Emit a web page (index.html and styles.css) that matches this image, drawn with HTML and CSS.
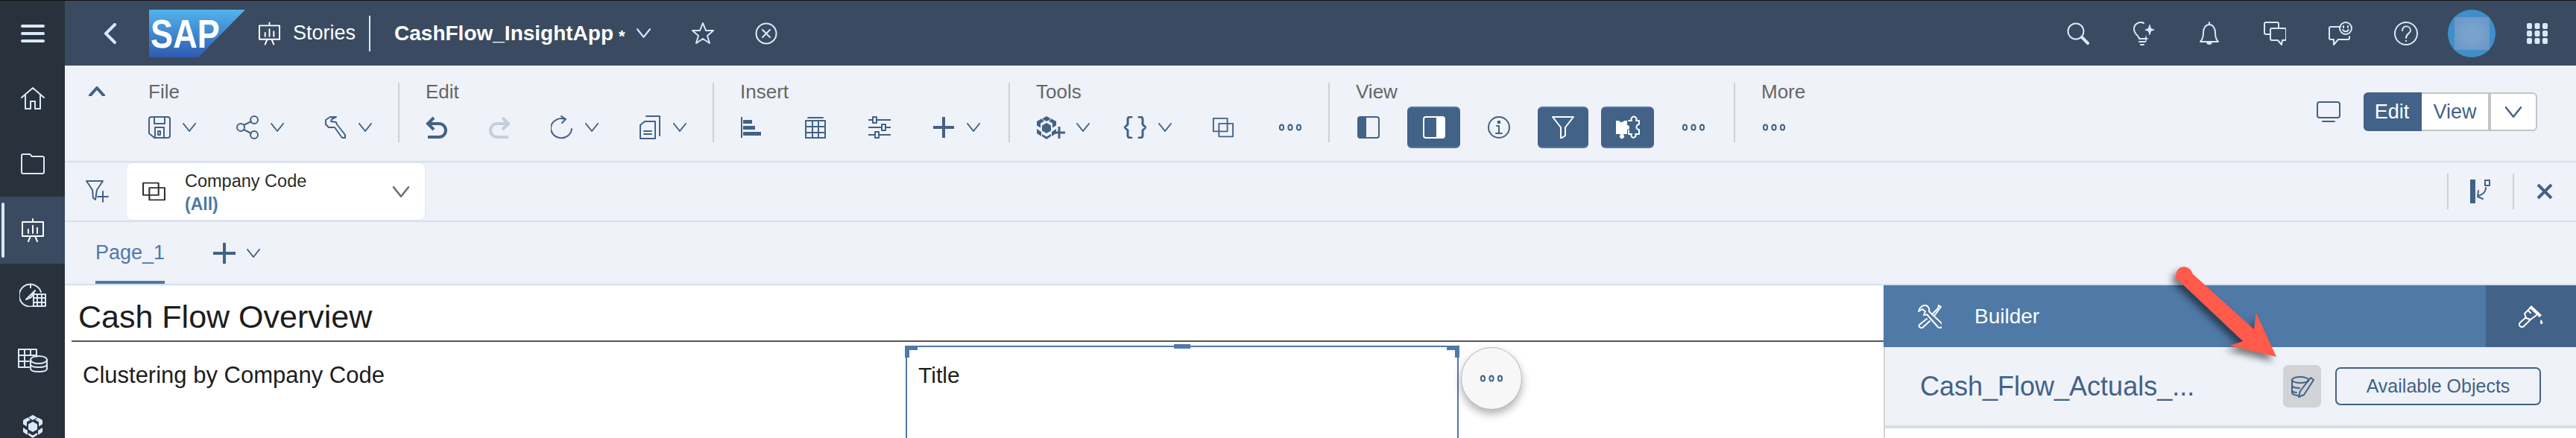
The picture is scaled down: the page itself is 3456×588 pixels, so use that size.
FILE: index.html
```html
<!DOCTYPE html>
<html lang="en">
<head>
  <meta charset="UTF-8">
  <title>CashFlow_InsightApp - Stories</title>
  <link rel="stylesheet" href="styles.css">
</head>
<body>
  <svg class="defs" width="0" height="0">
    <defs>
      <symbol id="chev" viewBox="0 0 18 12"><path d="M1 1l8 10 8-10"/></symbol>
      <symbol id="dots" viewBox="0 0 32 10"><ellipse cx="4.5" cy="5" rx="2.6" ry="3.6"/><ellipse cx="16" cy="5" rx="2.6" ry="3.6"/><ellipse cx="27.5" cy="5" rx="2.6" ry="3.6"/></symbol>
      <symbol id="stories" viewBox="0 0 30 32"><path d="M1 5h28v19H1zM15 1v4M9 31l3-7M21 31l-3-7"/><path d="M9 20v-5M15 20V10M21 20v-7"/></symbol>
      <symbol id="layers" viewBox="0 0 32 32" preserveAspectRatio="none"><path d="M2 2h20v20H2zM10 10h20v20H10z"/></symbol>
      <symbol id="hex" viewBox="0 0 28 32"><path d="M14 1l6 3.500-6 3.500-6-3.500zM14 10l6 3.500v7l-6 3.500-6-3.500v-7zM1 8l6-3.500 4 3-5 3v6l-5-3zM27 8l-6-3.500-4 3 5 3v6l5-3zM1 18l6 4v6l-6-4zM27 18l-6 4v6l6-4zM8 25l6 3.500 6-3.500v3l-6 4-6-4z"/></symbol>
    </defs>
  </svg>

  <nav class="sidenav">
    <a class="nav-item nav-first"><svg class="ico" width="32" height="24" viewBox="0 0 32 24"><path class="thick" d="M2 2h28M2 12h28M2 22h28"/></svg></a>
    <a class="nav-item"><svg class="ico" width="32" height="30" viewBox="0 0 32 30"><path d="M1 14L16 1l15 13M6 10v19h7V19h6v10h7V10"/></svg></a>
    <a class="nav-item"><svg class="ico" width="32" height="28" viewBox="0 0 32 28"><path d="M1 3a2 2 0 0 1 2-2h9l3 3h14a2 2 0 0 1 2 2v19a2 2 0 0 1-2 2H3a2 2 0 0 1-2-2z"/></svg></a>
    <a class="nav-item active"><svg class="ico ico-white" width="30" height="32"><use href="#stories"/></svg></a>
    <a class="nav-item"><svg class="ico" width="36" height="32" viewBox="0 0 36 32"><path d="M19 31A15 15 0 1 1 29 12M9 22l12-12-5 9zM15 3v3"/><path d="M19 15h16v16H19zM24 15v16M30 15v16M19 20h16M19 26h16"/></svg></a>
    <a class="nav-item"><svg class="ico" width="40" height="32" viewBox="0 0 40 32"><path d="M1 1h24v10M1 1v24h14M1 9h24M1 17h14M9 1v24M17 1v8"/><ellipse cx="28" cy="15" rx="11" ry="5"/><path d="M17 15v12c0 3 5 4 11 4s11-1 11-4V15M17 21c0 3 5 4 11 4s11-1 11-4"/></svg></a>
    <a class="nav-item"><svg class="hex-light" width="28" height="32"><use href="#hex"/></svg></a>
  </nav>

  <div class="main">
    <header class="shellbar">
      <svg class="ico back" width="16" height="28" viewBox="0 0 16 28"><path class="thick" d="M14 2L2 14l12 12"/></svg>
      <svg class="logo" width="129" height="64" viewBox="0 0 129 64">
        <defs>
          <linearGradient id="sapblue" x1="0" y1="0" x2="0" y2="1">
            <stop offset="0" stop-color="#52b4ec"/>
            <stop offset="1" stop-color="#2e5bb2"/>
          </linearGradient>
        </defs>
        <path d="M0 0h129L66 64H0z" fill="url(#sapblue)"/>
        <text class="logo-text" x="2" y="51" textLength="93" lengthAdjust="spacingAndGlyphs">SAP</text>
      </svg>
      <svg class="ico ico-white crumb-icon" width="29" height="32"><use href="#stories"/></svg>
      <span class="crumb">Stories</span>
      <span class="crumb-sep"></span>
      <span class="story-name">CashFlow_InsightApp</span>
      <span class="dirty">*</span>
      <svg class="ico shell-chev" width="19" height="13"><use href="#chev"/></svg>
      <svg class="ico fav" width="32" height="31" viewBox="0 0 32 31"><path d="M16 2l4 10h10l-8 7 3 10-9-6-9 6 3-10-8-7h10z"/></svg>
      <svg class="ico close-story" width="30" height="30" viewBox="0 0 30 30"><circle cx="15" cy="15" r="13.5"/><path d="M10 10l10 10M20 10L10 20"/></svg>

      <div class="shell-actions">
        <span class="shell-btn"><svg class="ico" width="30" height="30" viewBox="0 0 30 30"><circle cx="12" cy="12" r="10.5"/><path class="thick" d="M20 20l8 8"/></svg></span>
        <span class="shell-btn"><svg class="ico" width="30" height="32" viewBox="0 0 30 32"><path d="M9 23c0-4-7-6-7-13a9 9 0 0 1 13-8M9 23h8M9 27h8M11 31h4"/><path class="solid" d="M23 3l2 6 5 2-5 2-2 6-2-6-5-2 5-2zM18 18l1 4 3 1-3 1-1 4-1-4-3-1 3-1z"/></svg></span>
        <span class="shell-btn"><svg class="ico" width="28" height="32" viewBox="0 0 28 32"><path d="M2 27c3-3 4-6 4-12 0-6 3-11 8-11s8 5 8 11c0 6 1 9 4 12zM14 4V1"/><path class="solid" d="M10 27h8a4 4 0 0 1-8 0z"/></svg></span>
        <span class="shell-btn"><svg class="ico" width="30" height="32" viewBox="0 0 30 32"><path d="M9 17H3a2 2 0 0 1-2-2V3a2 2 0 0 1 2-2h15a2 2 0 0 1 2 2v6"/><path d="M11 9h17a2 2 0 0 1 2 2v12a2 2 0 0 1-2 2h-3l-1 6-5-6h-8a2 2 0 0 1-2-2V11a2 2 0 0 1 2-2z"/></svg></span>
        <span class="shell-btn"><svg class="ico" width="32" height="32" viewBox="0 0 32 32"><path d="M16 7H3a2 2 0 0 0-2 2v13a2 2 0 0 0 2 2h4l0 7 6-7h13a2 2 0 0 0 2-2v-2"/><circle cx="23" cy="9" r="8"/><path d="M19 11c2 3 6 3 8 0M20 6v2M26 6v2"/></svg></span>
        <span class="shell-btn"><svg class="ico" width="32" height="32" viewBox="0 0 32 32"><circle cx="16" cy="16" r="15"/><path d="M11 12c0-8 11-7 11 0 0 4-6 4-6 10"/><path class="solid" d="M15 25h2v2h-2z"/></svg></span>
        <span class="shell-btn"><span class="avatar"><span class="avatar-blur"></span></span></span>
        <span class="shell-btn"><svg class="ico-grid" width="28" height="28" viewBox="0 0 28 28"><rect x="0" y="0" width="7" height="8" rx="2"/><rect x="10.500" y="0" width="7" height="8" rx="2"/><rect x="21" y="0" width="7" height="8" rx="2"/><rect x="0" y="10" width="7" height="8" rx="2"/><rect x="10.500" y="10" width="7" height="8" rx="2"/><rect x="21" y="10" width="7" height="8" rx="2"/><rect x="0" y="20" width="7" height="8" rx="2"/><rect x="10.500" y="20" width="7" height="8" rx="2"/><rect x="21" y="20" width="7" height="8" rx="2"/></svg></span>
      </div>
    </header>

    <section class="toolbar">
      <svg class="ico-b collapse" width="22" height="13" viewBox="0 0 22 13"><path class="thick" d="M2 12l9-10 9 10"/></svg>

      <div class="group first">
        <div class="group-label">File</div>
        <div class="tools">
          <span class="tool"><svg class="ico-b" width="30" height="30" viewBox="0 0 30 30"><path d="M4 1h22a3 3 0 0 1 3 3v22a3 3 0 0 1-3 3H8l-7-6V4a3 3 0 0 1 3-3zM8 1v9h14V1M9 29V15h12v14M13 20h3v5h-3z"/></svg><svg class="ico-b chev" width="18" height="12"><use href="#chev"/></svg></span>
          <span class="tool"><svg class="ico-b" width="30" height="32" viewBox="0 0 30 32"><circle cx="6" cy="16" r="5"/><circle cx="24" cy="6" r="5"/><circle cx="24" cy="26" r="5"/><path d="M10 13l10-5M10 19l10 5"/></svg><svg class="ico-b chev" width="18" height="12"><use href="#chev"/></svg></span>
          <span class="tool"><svg class="ico-b" width="30" height="30" viewBox="0 0 30 30"><path d="M16 1H8L2 5v6l4 4h8l10 14h4v-4L17 11l-1-3-7-1 1-3z"/></svg><svg class="ico-b chev" width="18" height="12"><use href="#chev"/></svg></span>
        </div>
      </div>

      <div class="group">
        <div class="group-label">Edit</div>
        <div class="tools">
          <span class="tool"><svg class="ico-b bold" width="30" height="30" viewBox="0 0 30 30"><path d="M11 2L3 10l8 8M4 10h14a9 9 0 0 1 0 18H3"/></svg></span>
          <span class="tool tool-off"><svg class="ico-b bold" width="30" height="30" viewBox="0 0 30 30"><path d="M19 2l8 8-8 8M26 10H12a9 9 0 0 0 0 18h15"/></svg></span>
          <span class="tool"><svg class="ico-b" width="30" height="32" viewBox="0 0 30 32"><path d="M19 5A14 13 0 1 0 28 18M14 1l6 4-5 5"/></svg><svg class="ico-b chev" width="18" height="12"><use href="#chev"/></svg></span>
          <span class="tool"><svg class="ico-b" width="30" height="32" viewBox="0 0 30 32"><path d="M10 1h18v26M8 8h14v23H2V13zM7 21h10M7 25h10"/></svg><svg class="ico-b chev" width="18" height="12"><use href="#chev"/></svg></span>
        </div>
      </div>

      <div class="group">
        <div class="group-label">Insert</div>
        <div class="tools tools-wide">
          <span class="tool"><svg class="ico-b" width="30" height="28" viewBox="0 0 30 28"><path d="M2 0v28"/><path class="solid" d="M4 4h12v5H4zM4 12h16v5H4zM4 20h24v5H4z"/></svg></span>
          <span class="tool"><svg class="ico-b" width="30" height="30" viewBox="0 0 30 30"><path d="M2 6h26v23H2zM2 14h26M2 22h26M11 6v23M19 6v23M5 2h20" /></svg></span>
          <span class="tool"><svg class="ico-b" width="30" height="30" viewBox="0 0 30 30"><path d="M0 5h30M0 15h30M0 25h30"/><path class="knob" d="M6 1h5v8H6zM18 11h5v8h-5zM9 21h5v8H9z"/></svg></span>
          <span class="tool"><svg class="ico-b bold" width="30" height="30" viewBox="0 0 30 30"><path d="M15 1v28M1 15h28"/></svg><svg class="ico-b chev" width="18" height="12"><use href="#chev"/></svg></span>
        </div>
      </div>

      <div class="group">
        <div class="group-label">Tools</div>
        <div class="tools">
          <span class="tool tool-hex"><span class="hex-plus"><svg class="hex-dark" width="28" height="32"><use href="#hex"/></svg><svg class="ico-b plus-badge" width="16" height="16" viewBox="0 0 16 16"><path class="mid" d="M8 1v14M1 8h14"/></svg></span><svg class="ico-b chev" width="18" height="12"><use href="#chev"/></svg></span>
          <span class="tool"><svg class="ico-b mid" width="30" height="30" viewBox="0 0 30 30"><path d="M10 1H8a3 3 0 0 0-3 3v7l-4 4 4 4v7a3 3 0 0 0 3 3h2M20 1h2a3 3 0 0 1 3 3v7l4 4-4 4v7a3 3 0 0 1-3 3h-2"/></svg><svg class="ico-b chev" width="18" height="12"><use href="#chev"/></svg></span>
          <span class="tool"><svg class="ico-b" width="30" height="28"><use href="#layers"/></svg></span>
          <span class="tool tool-dots"><svg class="ico-b" width="32" height="10"><use href="#dots"/></svg></span>
        </div>
      </div>

      <div class="group">
        <div class="group-label">View</div>
        <div class="tools tools-view">
          <span class="tool"><svg class="ico-b" width="30" height="30" viewBox="0 0 30 30"><rect x="1" y="1" width="28" height="28" rx="3"/><path class="solid" d="M1 4a3 3 0 0 1 3-3h8v28H4a3 3 0 0 1-3-3z"/></svg></span>
          <span class="tool-on wide"><svg class="ico-w" width="30" height="30" viewBox="0 0 30 30"><rect x="1" y="1" width="28" height="28" rx="3"/><path class="solid" d="M18 1h8a3 3 0 0 1 3 3v22a3 3 0 0 1-3 3h-8z"/></svg></span>
          <span class="tool"><svg class="ico-b" width="30" height="30" viewBox="0 0 30 30"><circle cx="15" cy="15" r="14"/><path d="M12 13h3v10M11 23h8"/><path class="solid" d="M13 6h4v4h-4z"/></svg></span>
          <span class="tool-on"><svg class="ico-w" width="30" height="30" viewBox="0 0 30 30"><path d="M1 1h28L18 15v11l-6 4V15z"/></svg></span>
          <span class="tool-on wide"><svg class="ico-w" width="32" height="32" viewBox="0 0 32 32"><path class="solid" d="M0 7h4a4 4 0 0 0 7 0h4v6a3 3 0 1 1 0 6v6h-5v1a3 3 0 1 1-4 0v-1H0z"/><path d="M17 7h4a3.500 3.500 0 1 1 6 0h4v5a3 3 0 1 0 0 7v6h-5a3 3 0 1 1-5 0h-4v-5"/></svg></span>
          <span class="tool tool-more"><svg class="ico-b" width="32" height="10"><use href="#dots"/></svg></span>
        </div>
      </div>

      <div class="group">
        <div class="group-label">More</div>
        <div class="tools">
          <span class="tool"><svg class="ico-b" width="34" height="10"><use href="#dots"/></svg></span>
        </div>
      </div>

      <div class="mode-switch">
        <svg class="ico-b monitor" width="32" height="28" viewBox="0 0 32 28"><path d="M4 1h24a3 3 0 0 1 3 3v15a3 3 0 0 1-3 3H4a3 3 0 0 1-3-3V4a3 3 0 0 1 3-3zM8 27h16"/></svg>
        <div class="segmented">
          <span class="seg seg-on">Edit</span>
          <span class="seg">View</span>
          <span class="seg seg-arrow"><svg class="ico-b" width="24" height="15"><use href="#chev"/></svg></span>
        </div>
      </div>
    </section>

    <section class="filterbar">
      <svg class="ico-b" width="31" height="30" viewBox="0 0 31 30"><path d="M1 1h22l-8 12-2 13-3-2-1-11z"/><path d="M23 15v14M16 22h14"/></svg>
      <div class="filter-card">
        <svg class="ico-k" width="33" height="26"><use href="#layers"/></svg>
        <div class="filter-text">
          <div class="filter-name">Company Code</div>
          <div class="filter-value">(All)</div>
        </div>
        <svg class="ico-g" width="24" height="15"><use href="#chev"/></svg>
      </div>
      <div class="filter-tools">
        <span class="filter-tool"><svg class="ico-b" width="28" height="32" viewBox="0 0 28 32"><path class="solid" d="M1 0h7v32H1z"/><path d="M22 11c0 6-4 9-10 11M12 15l-1 8 7 3"/><path d="M21 1h6v7h-6z"/></svg></span>
        <span class="filter-tool filter-tool-x"><svg class="ico-b bold" width="22" height="22" viewBox="0 0 22 22"><path d="M2 2l18 18M20 2L2 20"/></svg></span>
      </div>
    </section>

    <section class="tabs">
      <span class="tab">Page_1</span>
      <svg class="ico-b bold add-page" width="30" height="28" viewBox="0 0 30 28"><path d="M15 0v28M0 14h30"/></svg>
      <svg class="ico-b chev" width="18" height="12"><use href="#chev"/></svg>
    </section>

    <section class="workspace">
      <div class="canvas">
        <h1 class="page-title">Cash Flow Overview</h1>
        <div class="tile-row">
          <div class="tile">Clustering by Company Code</div>
          <div class="tile tile-selected">
            Title
            <span class="handle handle-tl"></span>
            <span class="handle handle-top"></span>
            <span class="handle handle-tr"></span>
            <span class="tile-more"><svg class="ico-b" width="32" height="10"><use href="#dots"/></svg></span>
          </div>
        </div>
      </div>

      <aside class="panel">
        <div class="panel-head">
          <div class="panel-title">
            <svg class="ico-w" width="33" height="32" viewBox="0 0 33 32"><path d="M12 1a9 9 0 0 0-10 8l5-3 4 3-2 5a8 8 0 0 0 4-1l15 17a3 3 0 0 0 5-5L16 9a7 7 0 0 0-4-8zM13 19L3 27a3 3 0 0 0 4 4l10-9M20 13l8-8 1-4 3 2-3 4-6 8"/></svg>
            <span>Builder</span>
          </div>
          <div class="panel-tab"><svg class="ico-w" width="33" height="32" viewBox="0 0 33 32"><path d="M17 3L8 12l2 6 6 2 8-6M10 17l-8 7a3.500 3.500 0 0 0 5 5l9-9M13 8l3 3"/><path class="solid" d="M17 1l14 13-3 3L14 4zM30 20c-2 4-1 6 1 6s2-3-1-6z"/></svg></div>
        </div>
        <div class="panel-sub">
          <span class="model-name">Cash_Flow_Actuals_...</span>
          <span class="model-edit"><svg class="ico-b" width="32" height="32" viewBox="0 0 32 32"><ellipse cx="13" cy="7" rx="11" ry="4"/><path d="M2 7v17c0 3 6 4 9 4M2 14c0 3 6 4 10 4M2 21c0 2 4 3 6 3M24 8v1M31 7l-4-3L13 22l-2 8 7-3z"/></svg></span>
          <span class="objects-btn">Available Objects</span>
        </div>
      </aside>
    </section>
  </div>

  <svg class="callout" width="180" height="150" viewBox="0 0 180 150">
    <path d="M19 23Q19 9 30 8Q38 8 42 18L124 92L127 70L154 129L91 114L109 108Z"/>
  </svg>
</body>
</html>
```

FILE: styles.css
```css
* {
  box-sizing: border-box;
}

html, body {
  height: 100%;
}

body {
  margin: 0;
  display: flex;
  overflow: hidden;
  border-top: 1px solid #111;
  background: #fff;
  font-family: "Liberation Sans", Arial, sans-serif;
  color: #1d1d1d;
  position: relative;
}

.defs {
  position: absolute;
}

/* shared icon strokes */
.ico, .ico-b, .ico-w, .ico-k, .ico-g {
  flex: none;
  fill: none;
  stroke-width: 2;
  stroke-linecap: round;
  stroke-linejoin: round;
}

.ico { stroke: #d8e8fb; }
.ico-white { stroke: #fff; }
.ico-b { stroke: #426287; }
.ico-w { stroke: #fff; }
.ico-k { stroke: #2f2f2f; }
.ico-g { stroke: #6a6d70; }

.ico .solid { fill: #d8e8fb; stroke: none; }
.ico-b .solid { fill: #426287; stroke: none; }
.ico-w .solid { fill: #fff; stroke: none; }
.ico-b .knob { fill: #eff2f8; }
.hex-light { fill: #d8e8fb; }
.hex-dark { fill: #426287; }
.thick { stroke-width: 4; }
.mid { stroke-width: 3; }
.bold { stroke-width: 4; stroke-linecap: butt; stroke-linejoin: miter; }

/* left nav */
.sidenav {
  width: 87px;
  flex: none;
  overflow: hidden;
  background: #29323c;
}

.nav-item {
  height: 88px;
  display: flex;
  align-items: center;
  justify-content: center;
  position: relative;
}

.nav-first {
  height: 87px;
}

.nav-item.active {
  background: #3a4a60;
  height: 90px;
  margin-bottom: -2px;
}

.nav-item.active::before {
  content: "";
  position: absolute;
  left: 2px;
  top: 8px;
  bottom: 8px;
  width: 4px;
  border-radius: 2px;
  background: #d8e8fb;
}

/* shell bar */
.main {
  flex: 1;
  min-width: 0;
  display: flex;
  flex-direction: column;
}

.shellbar {
  height: 87px;
  flex: none;
  display: flex;
  align-items: center;
  padding-left: 53px;
  background: #3a4a60;
  color: #fff;
}

.logo {
  flex: none;
  margin-left: 44px;
}

.logo-text {
  font-family: "Liberation Sans", Arial, sans-serif;
  font-size: 54px;
  font-weight: bold;
  fill: #fff;
}

.crumb-icon {
  margin-left: 18px;
}

.crumb {
  margin-left: 17px;
  font-size: 27px;
}

.crumb-sep {
  width: 2px;
  height: 48px;
  margin-left: 18px;
  background: #d8e8fb;
}

.story-name {
  margin-left: 32px;
  font-size: 28px;
  font-weight: bold;
}

.dirty {
  margin-left: 7px;
  padding-top: 8px;
  font-size: 22px;
  font-weight: bold;
}

.shell-chev {
  margin-left: 15px;
}

.fav {
  margin-left: 54px;
}

.close-story {
  margin-left: 54px;
}

.shell-actions {
  margin-left: auto;
  padding-right: 8px;
  display: flex;
}

.shell-btn {
  width: 88px;
  height: 64px;
  display: flex;
  align-items: center;
  justify-content: center;
}

.ico-grid {
  fill: #d8e8fb;
}

.avatar {
  width: 64px;
  height: 64px;
  border-radius: 50%;
  background: #3f8fcb;
  display: flex;
  align-items: center;
  justify-content: center;
}

.avatar-blur {
  width: 47px;
  height: 44px;
  background: radial-gradient(circle, #78a3cf 30%, #6a94c2 100%);
}

/* toolbar */
.toolbar {
  height: 130px;
  flex: none;
  display: flex;
  align-items: flex-start;
  padding: 23px 0 0 32px;
  background: #eff2f8;
  border-bottom: 2px solid #d5e0ee;
}

.collapse {
  margin: 5px 58px 0 0;
}

.group {
  height: 80px;
  padding: 0 35px;
  border-left: 2px solid #ccd1d8;
}

.group.first {
  padding-left: 0;
  border-left: 0;
}

.group-label {
  height: 24px;
  line-height: 24px;
  font-size: 26px;
  color: #666;
}

.tools {
  display: flex;
  align-items: center;
  gap: 54px;
  height: 56px;
  margin-top: 8px;
}

.tools-wide {
  gap: 56px;
  margin-right: 3px;
}

.tools-view {
  gap: 37px;
  padding-left: 2px;
}

.tool {
  display: flex;
  align-items: center;
}

.tool-off svg {
  stroke: #c5cfdb;
}

.tool .chev {
  margin-left: 16px;
}

.tool-hex {
  margin-right: -8px;
}

.hex-plus {
  width: 38px;
  height: 32px;
  position: relative;
}

.plus-badge {
  position: absolute;
  right: -1px;
  bottom: 1px;
}

.tool-dots {
  margin-left: 5px;
}

.tool-more {
  margin-right: 3px;
}

.tool-on {
  width: 68px;
  height: 56px;
  display: flex;
  align-items: center;
  justify-content: center;
  background: #426287;
  border-bottom: 2px solid #4f79a7;
  border-top: 2px solid #4f79a7;
  border-radius: 6px;
}

.tool-on.wide {
  width: 71px;
}

.tool-on + .tool-on {
  margin-left: -20px;
}

.mode-switch {
  margin-left: auto;
  padding: 13px 52px 0 0;
  display: flex;
  align-items: center;
}

.monitor {
  margin-right: 31px;
}

.segmented {
  display: flex;
  height: 52px;
}

.seg {
  width: 91px;
  display: flex;
  align-items: center;
  justify-content: center;
  background: #fff;
  border: 2px solid #c4c4c4;
  border-left: 0;
  font-size: 27px;
  color: #426287;
}

.seg-on {
  width: 78px;
  background: #426287;
  border-color: #426287;
  border-radius: 6px 0 0 6px;
  color: #fff;
}

.seg-arrow {
  width: 64px;
  border-left: 2px solid #c4c4c4;
  border-radius: 0 6px 6px 0;
}

/* filter bar */
.filterbar {
  height: 80px;
  flex: none;
  display: flex;
  align-items: center;
  padding: 0 31px 0 28px;
  background: #eff2f8;
  border-bottom: 2px solid #d5e0ee;
}

.filter-card {
  width: 402px;
  height: 78px;
  margin: 0 0 0 23px;
  padding: 0 20px;
  display: flex;
  align-items: center;
  background: #fff;
  border: 1px solid #e6e8ec;
  border-radius: 8px;
}

.filter-text {
  flex: 1;
  margin-left: 25px;
  padding-top: 3px;
  line-height: 31px;
}

.filter-name {
  font-size: 23.500px;
  color: #2b2b2b;
}

.filter-value {
  font-size: 23px;
  font-weight: bold;
  color: #4a78a8;
}

.filter-tools {
  margin-left: auto;
  display: flex;
}

.filter-tool {
  height: 48px;
  padding: 0 30px 0 28px;
  display: flex;
  align-items: center;
  border-left: 2px solid #ccd1d8;
}

.filter-tool-x {
  padding: 0 0 0 30px;
}

/* tabs */
.tabs {
  height: 85px;
  flex: none;
  display: flex;
  align-items: center;
  padding-left: 41px;
  background: #eff2f8;
  border-bottom: 2px solid #d5e0ee;
}

.tab {
  height: 83px;
  padding-top: 26px;
  font-size: 27px;
  color: #4f79a7;
  border-bottom: 4px solid #4f79a7;
}

.add-page {
  margin: 0 15px 0 65px;
}

/* canvas and builder panel */
.workspace {
  flex: 1;
  min-height: 0;
  display: flex;
  overflow: hidden;
}

.canvas {
  flex: 1;
  min-width: 0;
  padding-left: 9px;
}

.page-title {
  height: 76px;
  margin: 0;
  padding: 19px 0 0 9px;
  font-size: 43px;
  font-weight: normal;
  line-height: 46px;
  border-bottom: 2px solid #555;
}

.tile-row {
  display: flex;
  margin-top: 5px;
}

.tile {
  width: 1119px;
  height: 124px;
  padding: 23px 0 0 15px;
  font-size: 31px;
  line-height: 34px;
}

.tile-selected {
  width: 742px;
  position: relative;
  padding-top: 21px;
  font-size: 30px;
  border: 2px solid #4f79a7;
  border-bottom: 0;
}

.handle {
  position: absolute;
  background: #4f79a7;
}

.handle-tl, .handle-tr {
  top: -2px;
  width: 6px;
  height: 16px;
}

.handle-tl {
  left: -3px;
}

.handle-tr {
  right: -3px;
}

.handle-tl::after, .handle-tr::after {
  content: "";
  position: absolute;
  top: 0;
  width: 17px;
  height: 6px;
  background: #4f79a7;
}

.handle-tl::after {
  left: 0;
}

.handle-tr::after {
  right: 0;
}

.handle-top {
  top: -4px;
  left: 358px;
  width: 22px;
  height: 6px;
}

.tile-more {
  position: absolute;
  top: 0;
  left: 743px;
  width: 82px;
  height: 84px;
  display: flex;
  align-items: center;
  justify-content: center;
  background: #f7f7f7;
  border: 1px solid #bcbcbc;
  border-radius: 50%;
  box-shadow: 0 6px 12px rgba(0, 0, 0, 0.3);
}

.panel {
  width: 929px;
  flex: none;
  border-left: 2px solid #d4d4d4;
}

.panel-head {
  height: 83px;
  margin-left: -2px;
  display: flex;
  background: #4f79a7;
  color: #fff;
}

.panel-title {
  flex: 1;
  padding-left: 45px;
  display: flex;
  align-items: center;
  gap: 44px;
  font-size: 28px;
}

.panel-tab {
  width: 121px;
  display: flex;
  align-items: center;
  justify-content: center;
  background: #426287;
}

.panel-sub {
  height: 109px;
  padding: 0 47px;
  display: flex;
  align-items: center;
  background: #eff2f8;
  border-bottom: 4px solid #d3dfea;
}

.model-name {
  flex: 1;
  font-size: 36px;
  color: #426287;
}

.model-edit {
  width: 51px;
  height: 57px;
  margin-right: 19px;
  display: flex;
  align-items: center;
  justify-content: center;
  background: #d1d3d6;
  border-radius: 7px;
}

.objects-btn {
  width: 276px;
  height: 51px;
  display: flex;
  align-items: center;
  justify-content: center;
  font-size: 25px;
  color: #426287;
  border: 2px solid #426287;
  border-radius: 7px;
}

/* red annotation arrow drawn over the page */
.callout {
  position: absolute;
  left: 2900px;
  top: 349px;
  fill: #ff5a4a;
  filter: drop-shadow(-5px 6px 5px rgba(0, 0, 0, 0.5));
}
```
